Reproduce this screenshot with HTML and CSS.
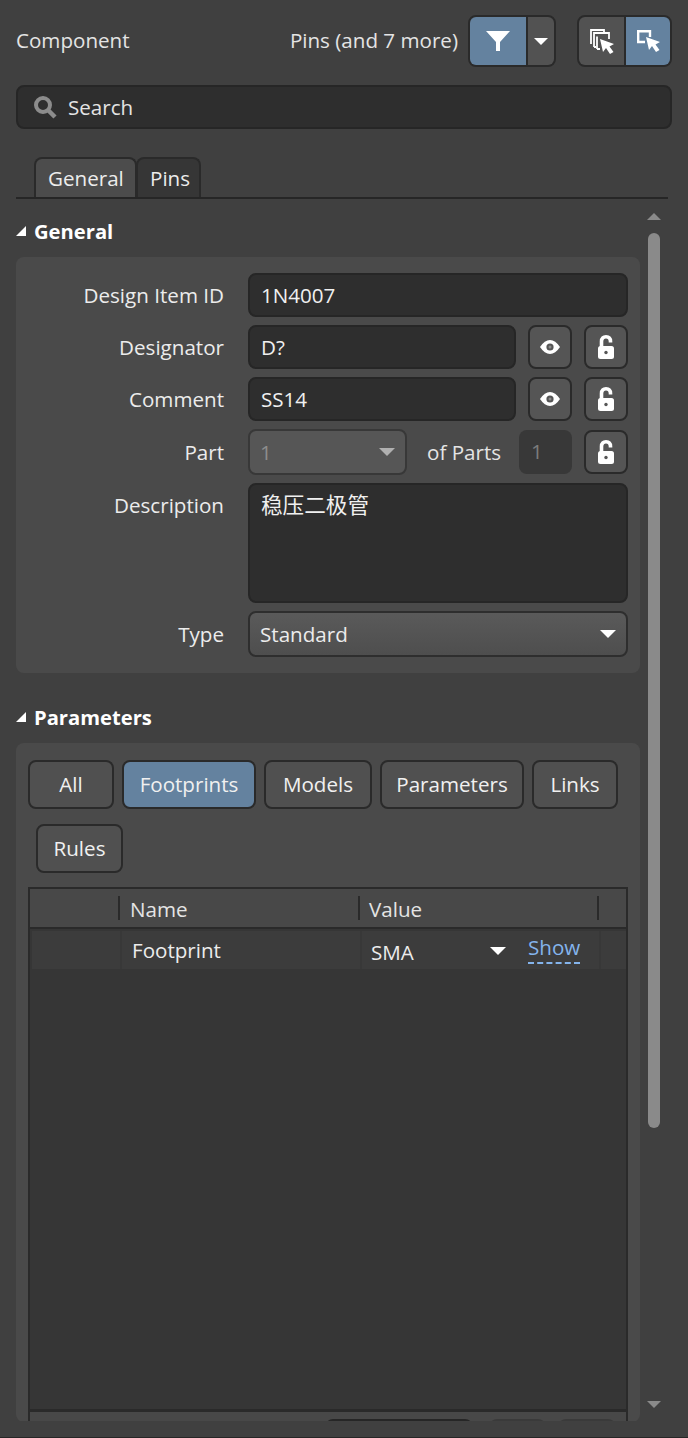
FILE: index.html
```html
<!DOCTYPE html>
<html lang="en">
<head>
<meta charset="utf-8">
<title>Component</title>
<link rel="stylesheet" href="styles.css">
</head>
<body>
<div class="app">
  <header class="top">
    <span class="title">Component</span>
    <span class="filter-label">Pins (and 7 more)</span>
    <div class="btn-group filter-group">
      <button class="seg active seg-filter"><svg width="24" height="20" viewBox="0 0 24 20"><path d="M0 0H24L14 11V20H10V11Z" fill="#fff"/></svg></button>
      <button class="seg seg-caret"><svg width="14" height="7" viewBox="0 0 14 7"><path d="M0 0H14L7 7Z" fill="#fff"/></svg></button>
    </div>
    <div class="btn-group select-group">
      <button class="seg seg-a"><svg width="26" height="26" viewBox="0 0 26 26" fill="none"><path d="M2 16V2H15V5M5 19V5H20V11M8 21V8.500M5 19H7M8 21H11" stroke="#fff" stroke-width="1.800"/><path d="M11 11L25 16L20.500 18.500L24.500 24L21 26L17 20L14 24Z" fill="#fff"/></svg></button>
      <button class="seg active seg-b"><svg width="26" height="26" viewBox="0 0 26 26" fill="none"><path d="M15 9V3.200H3.200V14H10" stroke="#fff" stroke-width="2.400"/><path d="M11 9L25 14L20.500 16.500L24.500 22L21 24L17 18L14 22Z" fill="#fff"/></svg></button>
    </div>
  </header>

  <div class="search">
    <svg width="24" height="24" viewBox="0 0 24 24" fill="none"><circle cx="10" cy="10" r="7" stroke="#8c8c8c" stroke-width="4"/><path d="M15 15L22 22" stroke="#8c8c8c" stroke-width="4.500"/></svg>
    <span>Search</span>
  </div>

  <nav class="tabs">
    <span class="tab current">General</span>
    <span class="tab tab-pins">Pins</span>
  </nav>

  <div class="viewport">
    <main class="content">
      <h2 class="section-head"><i class="tri"></i>General</h2>
      <section class="panel general">
        <div class="row">
          <label>Design Item ID</label>
          <div class="field grow">1N4007</div>
        </div>
        <div class="row">
          <label>Designator</label>
          <div class="field grow">D?</div>
          <button class="icon-btn"><svg width="20" height="14" viewBox="0 0 20 14"><path d="M0 7C3 2.300 6.500 0 10 0S17 2.300 20 7C17 11.700 13.500 14 10 14S3 11.700 0 7Z" fill="#fff"/><circle cx="10" cy="7" r="3.600" fill="#555"/><circle cx="10" cy="7" r="1.500" fill="#8a8a8a"/></svg></button>
          <button class="icon-btn"><svg width="16" height="24" viewBox="0 0 16 24"><path d="M3.500 12V6.500C3.500 3 5.500 1.800 8 1.800S12.500 3 12.500 6.500V7.500" fill="none" stroke="#fff" stroke-width="3.600"/><rect y="11" width="16" height="13" rx="2.500" fill="#fff"/><circle cx="8" cy="17.500" r="1.700" fill="#555"/></svg></button>
        </div>
        <div class="row">
          <label>Comment</label>
          <div class="field grow">SS14</div>
          <button class="icon-btn"><svg width="20" height="14" viewBox="0 0 20 14"><path d="M0 7C3 2.300 6.500 0 10 0S17 2.300 20 7C17 11.700 13.500 14 10 14S3 11.700 0 7Z" fill="#fff"/><circle cx="10" cy="7" r="3.600" fill="#555"/><circle cx="10" cy="7" r="1.500" fill="#8a8a8a"/></svg></button>
          <button class="icon-btn"><svg width="16" height="24" viewBox="0 0 16 24"><path d="M3.500 12V6.500C3.500 3 5.500 1.800 8 1.800S12.500 3 12.500 6.500V7.500" fill="none" stroke="#fff" stroke-width="3.600"/><rect y="11" width="16" height="13" rx="2.500" fill="#fff"/><circle cx="8" cy="17.500" r="1.700" fill="#555"/></svg></button>
        </div>
        <div class="row row-part">
          <label>Part</label>
          <div class="select part-select">1<i class="caret dim"></i></div>
          <span class="of-parts">of Parts</span>
          <div class="part-count">1</div>
          <button class="icon-btn"><svg width="16" height="24" viewBox="0 0 16 24"><path d="M3.500 12V6.500C3.500 3 5.500 1.800 8 1.800S12.500 3 12.500 6.500V7.500" fill="none" stroke="#fff" stroke-width="3.600"/><rect y="11" width="16" height="13" rx="2.500" fill="#fff"/><circle cx="8" cy="17.500" r="1.700" fill="#555"/></svg></button>
        </div>
        <div class="row row-top">
          <label>Description</label>
          <div class="field grow textarea">稳压二极管</div>
        </div>
        <div class="row">
          <label>Type</label>
          <div class="select grow type-select">Standard<i class="caret"></i></div>
        </div>
      </section>

      <h2 class="section-head params-head"><i class="tri"></i>Parameters</h2>
      <section class="panel params">
        <div class="chips">
          <button class="chip chip-86">All</button>
          <button class="chip chip-134 on">Footprints</button>
          <button class="chip chip-108">Models</button>
          <button class="chip chip-144">Parameters</button>
          <button class="chip chip-86">Links</button>
          <button class="chip chip-87 indent">Rules</button>
        </div>
        <div class="table">
          <div class="thead">
            <span class="th th-blank"></span>
            <span class="th th-name">Name</span>
            <span class="th th-value">Value</span>
            <span class="th th-end"></span>
          </div>
          <div class="trow">
            <span class="td td-blank"></span>
            <span class="td td-name">Footprint</span>
            <span class="td td-value"><span class="sma">SMA</span><i class="caret small"></i><a class="show">Show</a></span>
            <span class="td td-end"></span>
          </div>
          <div class="tbody-fill"></div>
          <div class="tfoot">
            <span class="foot-btn wide"></span>
            <span class="foot-btn"></span>
            <span class="foot-btn last"></span>
          </div>
        </div>
      </section>
    </main>
    <aside class="scrollbar">
      <i class="arrow up"></i>
      <div class="track"><div class="thumb"></div></div>
      <i class="arrow down"></i>
    </aside>
  </div>
  <div class="bottom-line"></div>
</div>
</body>
</html>
```

FILE: styles.css
```css
* { box-sizing: border-box; }
html, body { margin: 0; padding: 0; height: 100%; overflow: hidden; }
body {
  background: #404040;
  color: #f2f2f2;
  font-family: "Open Sans", "Noto Sans CJK SC", sans-serif;
  font-size: 20.6px;
  line-height: 28px;
}
button { font: inherit; color: inherit; padding: 0; }
.app { height: 1438px; display: flex; flex-direction: column; }

.top { display: flex; align-items: center; height: 52px; margin: 15px 16px 0; }
.title { flex: 1; color: #e4e4e4; padding-bottom: 2px; }
.filter-label { color: #e4e4e4; margin-right: 10px; padding-bottom: 2px; }
.btn-group { display: flex; height: 52px; border: 2px solid #2a2a2a; border-radius: 8px; overflow: hidden; background: #2a2a2a; gap: 2px; }
.seg { border: 0; background: #525252; display: flex; align-items: center; justify-content: center; }
.seg.active { background: #64829f; }
.seg-filter { width: 56px; }
.seg-caret { width: 26px; }
.filter-group { margin-right: 21px; }
.seg-a { width: 45px; }
.seg-b { width: 44px; }

.search { display: flex; align-items: center; gap: 11px; height: 44px; margin: 18px 16px 0; padding: 0 15px; background: #2e2e2e; border: 2px solid #262626; border-radius: 8px; color: #e4e4e4; }

.tabs { display: flex; height: 42px; margin: 28px 20px 0 16px; padding-left: 18px; border-bottom: 2px solid #262626; }
.tab { height: 40px; width: 103px; padding: 0 0 0 12px; background: #363636; border: 2px solid #2a2a2a; border-bottom: 0; border-radius: 8px 8px 0 0; line-height: 39px; color: #ececec; white-space: nowrap; }
.tab.current { background: #4c4c4c; margin-right: -1px; position: relative; }
.tab-pins { width: 65px; }

.viewport { display: flex; height: 1222px; overflow: hidden; padding-left: 16px; }
.content { width: 624px; flex: none; overflow: hidden; }
.section-head { display: flex; align-items: center; margin: 18px 0 10px; padding-bottom: 2px; font-size: 20.2px; font-weight: 700; line-height: 28px; color: #fff; }
.params-head { margin-top: 30px; }
.tri { width: 0; height: 0; margin-right: 8px; border-style: solid; border-width: 0 0 10px 10px; border-color: transparent transparent #fff transparent; }
.panel { background: #4a4a4a; border-radius: 8px; }

.general { height: 416px; padding: 16px 12px 0 0; display: flex; flex-direction: column; gap: 8px; }
.row { display: flex; align-items: center; height: 44px; gap: 12px; }
.row label { width: 208px; flex: none; text-align: right; margin-right: 12px; color: #ececec; }
.row-part { margin-top: 1px; }
.row-top { align-items: flex-start; height: 120px; margin-top: 1px; margin-bottom: 1px; }
.row-top label { margin-top: 8px; }
.grow { flex: 1; }
.field { height: 44px; background: #2e2e2e; border: 2px solid #262626; border-radius: 8px; padding: 0 11px; line-height: 40px; color: #f0f0f0; }
.textarea { height: 120px; line-height: 40px; font-size: 21.6px; padding: 0 11px; }
.icon-btn { width: 44px; height: 44px; flex: none; background: #555; border: 2px solid #2a2a2a; border-radius: 8px; display: flex; align-items: center; justify-content: center; }
.select { position: relative; height: 46px; border: 2px solid #2e2e2e; border-radius: 8px; padding: 0 10px; line-height: 42px; }
.part-select { width: 159px; flex: none; background: #565656; color: #8d8d8d; border-color: #383838; }
.type-select { background: linear-gradient(#5a5a5a, #4e4e4e); color: #ececec; }
.caret { position: absolute; right: 10px; top: 17px; width: 0; height: 0; border-style: solid; border-width: 8px 8px 0; border-color: #fff transparent transparent; }
.caret.dim { border-top-color: #b0b0b0; }
.of-parts { width: 72px; margin-left: 8px; color: #e4e4e4; flex: none; white-space: nowrap; }
.part-count { width: 53px; height: 44px; flex: none; margin-left: 8px; background: #383838; border-radius: 8px; padding-left: 12px; line-height: 42px; color: #7c7c7c; }

.params { height: 679px; padding: 17px 12px 0; overflow: hidden; }
.chips { display: flex; flex-wrap: wrap; gap: 15px 8px; }
.chip { height: 49px; padding: 0 0 2px; background: #505050; border: 2px solid #2a2a2a; border-radius: 8px; color: #f0f0f0; white-space: nowrap; }
.chip-86 { width: 86px; }
.chip-87 { width: 87px; }
.chip-108 { width: 108px; }
.chip-134 { width: 134px; }
.chip-144 { width: 144px; }
.chip.on { background: #64829f; }
.chip.indent { margin-left: 8px; }

.table { margin-top: 14px; height: 570px; border: 2px solid #2a2a2a; background: #363636; display: flex; flex-direction: column; }
.thead { display: flex; height: 40px; flex: none; background: #484848; border-bottom: 2px solid #2a2a2a; color: #e4e4e4; }
.th { display: block; line-height: 40px; position: relative; padding-left: 12px; }
.th-blank { width: 88px; padding: 0; }
.th-name { width: 240px; }
.th-value { width: 239px; padding-left: 11px; }
.th-end { flex: 1; }
.th-name::before, .th-value::before, .th-end::before { content: ""; position: absolute; left: 0; top: 7px; width: 2px; height: 24px; background: #2a2a2a; }
.trow { display: flex; height: 38px; flex: none; margin: 2px 0 0 2px; background: #3c3c3c; color: #ececec; }
.td { display: block; position: relative; line-height: 42px; padding-left: 10px; border-left: 2px solid #383838; }
.td-blank { width: 88px; padding: 0; border: 0; }
.td-name { width: 240px; line-height: 39px; }
.td-value { width: 239px; line-height: 43px; padding-left: 9px; }
.td-end { flex: 1; }
.caret.small { right: 93px; top: 16px; border-width: 8px 8px 0; }
.show { position: absolute; left: 166px; top: 2px; line-height: 28px; padding-bottom: 1px; color: #84b4ec; border-bottom: 2px dashed #84b4ec; }
.tbody-fill { flex: 1; }
.tfoot { display: flex; justify-content: flex-end; height: 46px; flex: none; padding: 7px 10px 0 0; background: #484848; border-top: 3px solid #2a2a2a; }
.foot-btn { width: 57px; height: 20px; margin-right: 12px; background: #444; border-top: 2px solid #3a3a3a; border-radius: 8px 8px 0 0; }
.foot-btn.last { width: 58px; margin-right: 0; }
.foot-btn.wide { width: 148px; margin-right: 16px; background: #333; border-top-color: #262626; }

.scrollbar { width: 48px; padding: 14px 0 0 8px; display: flex; flex-direction: column; align-items: flex-start; }
.arrow { width: 0; height: 0; margin-left: -1px; border-style: solid; border-width: 0 7px 7px; border-color: transparent transparent #8a8a8a; }
.arrow.down { border-width: 7px 7px 0; border-color: #8a8a8a transparent transparent; }
.track { height: 1181px; padding-top: 13px; }
.thumb { width: 12px; height: 895px; background: #8a8a8a; border-radius: 6px; }
.bottom-line { height: 1px; margin-top: auto; background: #262626; }
```
